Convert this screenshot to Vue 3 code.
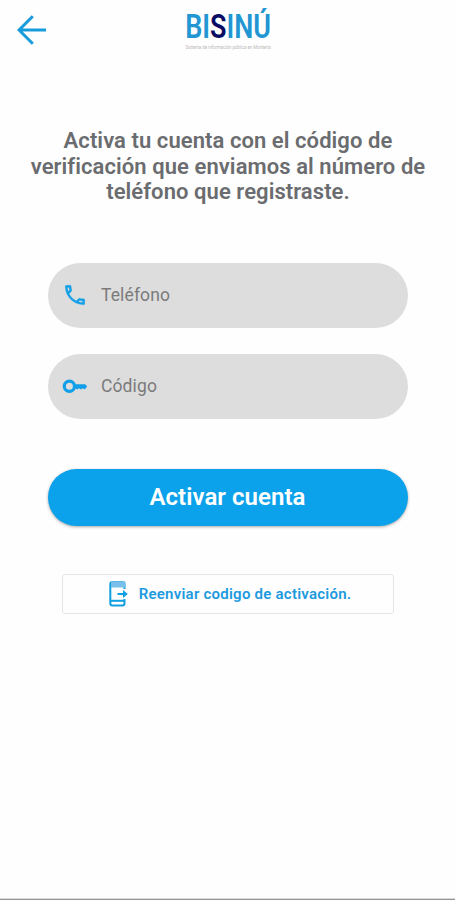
<script setup>
const lines = [
  'Activa tu cuenta con el código de',
  'verificación que enviamos al número de',
  'teléfono que registraste.',
]
</script>

<template>
  <main class="screen">
    <header class="bar">
      <button class="back" aria-label="Volver">
        <svg width="30" height="30" viewBox="0 0 30 30" fill="none" stroke="#189bdc" stroke-width="3">
          <path d="M29 15H2.5M15.8 1.2L2 15L15.8 28.8" />
        </svg>
      </button>
      <svg class="logo" width="90" height="50" viewBox="0 0 90 50">
        <g transform="translate(1.2 31) scale(0.7 1)">
          <text class="brand" x="0" y="0" textLength="122.5" lengthAdjust="spacingAndGlyphs">BI<tspan fill="#090c64">S</tspan>INÚ</text>
        </g>
        <text class="tagline" x="1.5" y="42" textLength="85" lengthAdjust="spacingAndGlyphs">Sistema de información pública en Montería</text>
      </svg>
    </header>

    <h1 class="title">
      <span v-for="line in lines" :key="line">{{ line }}</span>
    </h1>

    <form class="form" @submit.prevent>
      <label class="field">
        <svg width="26" height="26" viewBox="0 0 24 24" fill="#109fe8" stroke="#109fe8" stroke-width="0.2">
          <path d="M6.54 5c.06.89.21 1.76.45 2.59l-1.2 1.2c-.41-1.2-.67-2.47-.76-3.79h1.51m9.86 12.02c.85.24 1.72.39 2.6.45v1.49c-1.32-.09-2.59-.35-3.8-.75l1.2-1.19M7.5 3H4c-.55 0-1 .45-1 1 0 9.39 7.61 17 17 17 .55 0 1-.45 1-1v-3.49c0-.55-.45-1-1-1-1.24 0-2.45-.2-3.57-.57-.1-.04-.21-.05-.31-.05-.26 0-.51.1-.71.29l-2.2 2.2c-2.83-1.45-5.15-3.76-6.59-6.59l2.2-2.2c.28-.28.36-.67.25-1.02C8.7 6.45 8.5 5.25 8.5 4c0-.55-.45-1-1-1z" />
        </svg>
        <span>Teléfono</span>
      </label>
      <label class="field">
        <svg width="26" height="26" viewBox="0 0 26 26" fill="none">
          <circle cx="7.4" cy="13.3" r="5.1" stroke="#109fe8" stroke-width="3.2" />
          <path d="M12 11.2H23.2L25.2 13.4L22.6 16.4L20.7 15.2L18.8 16.4L17 15.2L15.4 16.4L13.8 15.4H12Z" fill="#109fe8" />
        </svg>
        <span>Código</span>
      </label>
      <button class="primary">Activar cuenta</button>
      <button class="resend">
        <svg width="22" height="28" viewBox="0 0 22 28" fill="none" stroke="#109fe0" stroke-width="2">
          <path d="M16.5 9V4.2Q16.5 2 14.5 2H4.5Q2.3 2 2.3 4.2V23.2Q2.3 25.4 4.5 25.4H14.5Q16.5 25.4 16.5 23.2V19" />
          <path d="M3 1.2H16Q17.5 1.2 17.5 3V7.4H3Z" fill="#78bfea" stroke="none" />
          <path d="M2.3 20.8H17" />
          <path d="M9.5 14H17" />
          <path d="M15 10L19.8 14L15 18Z" fill="#109fe0" stroke="none" />
        </svg>
        <span>Reenviar codigo de activación.</span>
      </button>
    </form>
    <footer class="edge"></footer>
  </main>
</template>

<style>
body {
  margin: 0;
  background: #fefefe;
}
</style>

<style scoped>
.screen {
  box-sizing: border-box;
  width: 455px;
  height: 900px;
  display: flex;
  flex-direction: column;
  overflow: hidden;
  background: #fefefe;
  font-family: Roboto, sans-serif;
}
button {
  margin: 0;
  padding: 0;
  border: 0;
  background: none;
  font-family: inherit;
}
.bar {
  display: flex;
  align-items: flex-start;
  height: 60px;
  padding: 7px 0 0 17px;
  box-sizing: border-box;
}
.back {
  width: 30px;
  height: 30px;
  margin-top: 8px;
}
.back svg {
  display: block;
}
.logo {
  display: block;
  margin-left: 137px;
  overflow: visible;
}
.brand {
  font-size: 32.5px;
  font-weight: 600;
  fill: #2196d3;
}
.tagline {
  font-size: 5px;
  fill: #b9b9b9;
}
.title {
  display: flex;
  flex-direction: column;
  align-items: center;
  margin: 68px 0 0;
  padding-left: 1px;
  font-size: 22px;
  font-weight: 600;
  line-height: 25.6px;
  letter-spacing: 0.07px;
  color: #6a6c6f;
  white-space: nowrap;
}
.form {
  display: flex;
  flex-direction: column;
  align-items: center;
  margin-top: 58px;
}
.field {
  box-sizing: border-box;
  width: 360px;
  height: 65px;
  margin-bottom: 26px;
  padding-left: 14px;
  display: flex;
  align-items: center;
  gap: 13.5px;
  border-radius: 33px;
  background: #dddddd;
  color: #7b7b7b;
  font-size: 17.5px;
  letter-spacing: 0.12px;
}
.primary {
  width: 360px;
  height: 57px;
  margin-top: 24px;
  border-radius: 29px;
  background: #0ca2eb;
  box-shadow: 0 1px 3px rgba(0, 0, 0, 0.35);
  color: #fff;
  font-size: 24px;
  font-weight: 600;
  letter-spacing: 0.05px;
}
.resend {
  box-sizing: border-box;
  width: 332px;
  height: 40px;
  margin-top: 48px;
  padding-left: 4px;
  display: flex;
  align-items: center;
  justify-content: center;
  gap: 9px;
  border: 1px solid #e5e5e5;
  border-radius: 3px;
  color: #1d9ade;
  font-size: 15px;
  font-weight: 600;
  letter-spacing: 0.24px;
}
.edge {
  height: 1px;
  margin-top: auto;
  border-top: 1px solid #d9dbda;
  background: #939594;
}
</style>
